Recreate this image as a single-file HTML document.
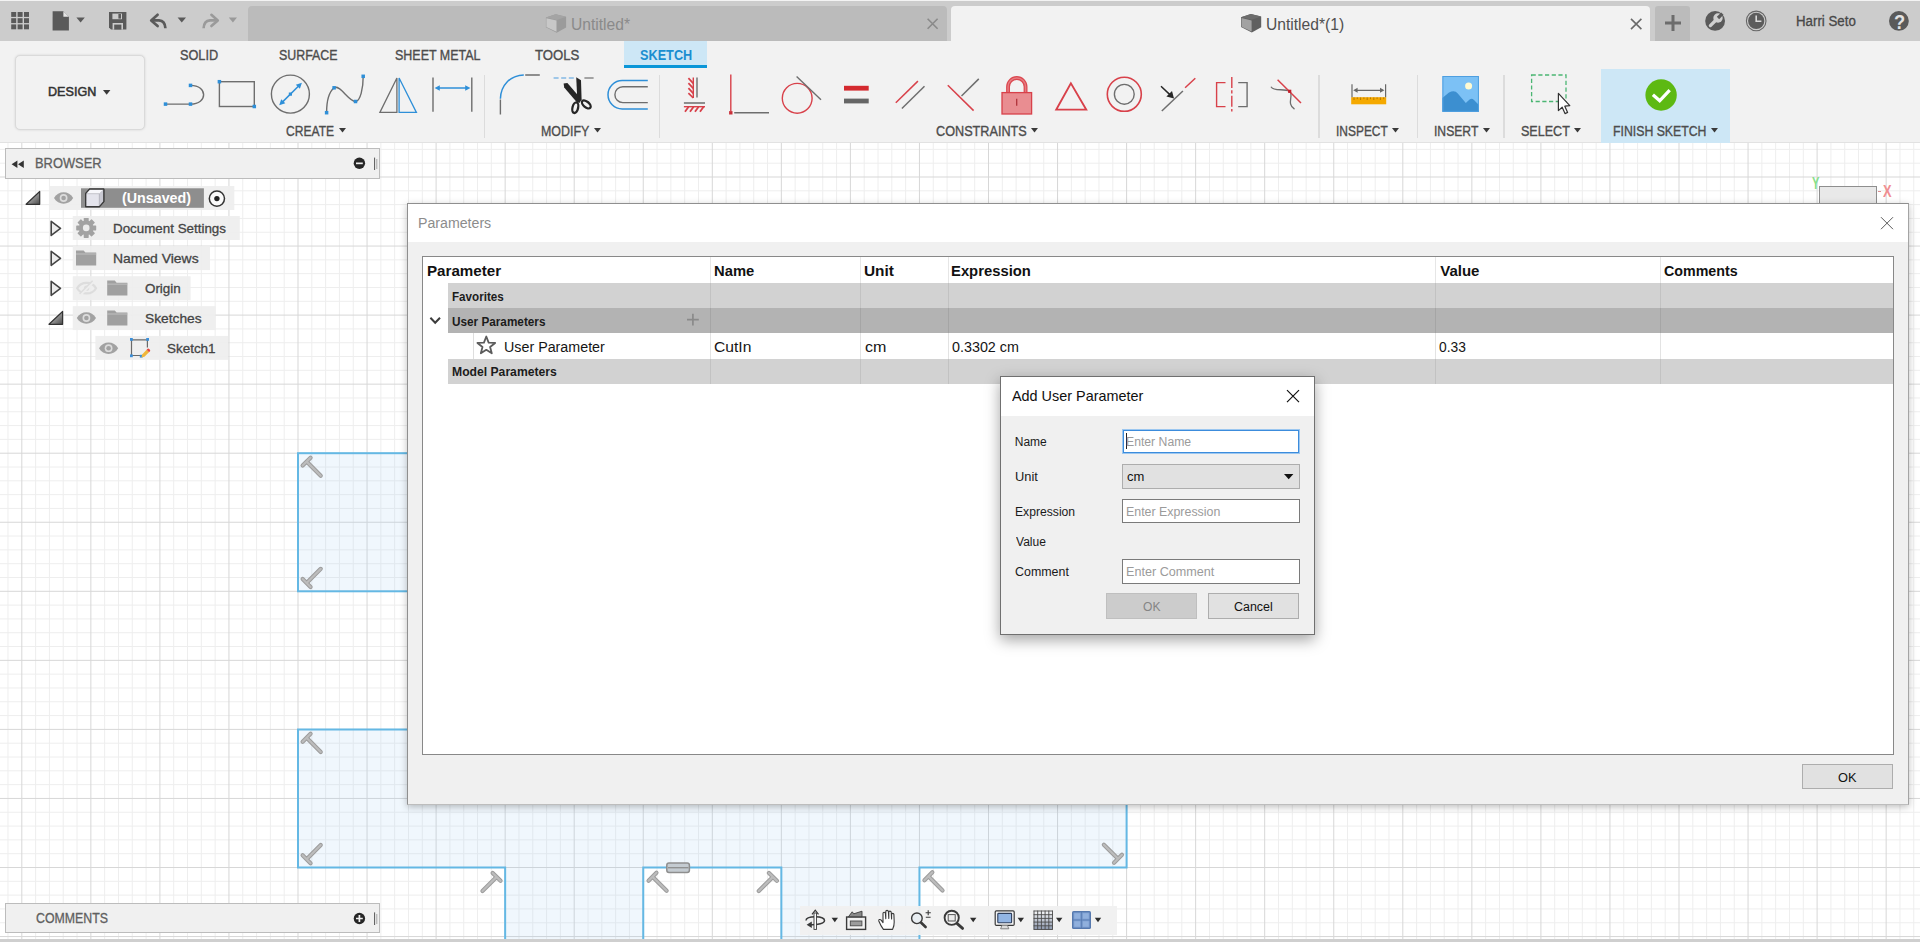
<!DOCTYPE html>
<html lang="en"><head><meta charset="utf-8"><title>Autodesk Fusion 360 - Parameters</title>
<style>
html,body{margin:0;padding:0;}
body{width:1920px;height:942px;overflow:hidden;background:#fff;position:relative;font-family:"Liberation Sans",Arial,sans-serif;}
.b{position:absolute;box-sizing:border-box;display:block;}
.t{position:absolute;white-space:nowrap;transform-origin:0 50%;display:block;}
svg{overflow:visible;}
</style></head><body>
<main id="canvas">
<svg class="b" style="left:0;top:0" width="1920" height="942" viewBox="0 0 1920 942"><path d="M7.99 142V942M35.61 142V942M49.42 142V942M63.23 142V942M77.04 142V942M104.66 142V942M118.47 142V942M132.28 142V942M146.09 142V942M173.71 142V942M187.52 142V942M201.33 142V942M215.14 142V942M242.76 142V942M256.57 142V942M270.38 142V942M284.19 142V942M311.81 142V942M325.62 142V942M339.43 142V942M353.24 142V942M380.86 142V942M394.67 142V942M408.48 142V942M422.29 142V942M449.91 142V942M463.72 142V942M477.53 142V942M491.34 142V942M518.96 142V942M532.77 142V942M546.58 142V942M560.39 142V942M588.01 142V942M601.82 142V942M615.63 142V942M629.44 142V942M657.06 142V942M670.87 142V942M684.68 142V942M698.49 142V942M726.11 142V942M739.92 142V942M753.73 142V942M767.54 142V942M795.16 142V942M808.97 142V942M822.78 142V942M836.59 142V942M864.21 142V942M878.02 142V942M891.83 142V942M905.64 142V942M933.26 142V942M947.07 142V942M960.88 142V942M974.69 142V942M1002.31 142V942M1016.12 142V942M1029.93 142V942M1043.74 142V942M1071.36 142V942M1085.17 142V942M1098.98 142V942M1112.79 142V942M1140.41 142V942M1154.22 142V942M1168.03 142V942M1181.84 142V942M1209.46 142V942M1223.27 142V942M1237.08 142V942M1250.89 142V942M1278.51 142V942M1292.32 142V942M1306.13 142V942M1319.94 142V942M1347.56 142V942M1361.37 142V942M1375.18 142V942M1388.99 142V942M1416.61 142V942M1430.42 142V942M1444.23 142V942M1458.04 142V942M1485.66 142V942M1499.47 142V942M1513.28 142V942M1527.09 142V942M1554.71 142V942M1568.52 142V942M1582.33 142V942M1596.14 142V942M1623.76 142V942M1637.57 142V942M1651.38 142V942M1665.19 142V942M1692.81 142V942M1706.62 142V942M1720.43 142V942M1734.24 142V942M1761.86 142V942M1775.67 142V942M1789.48 142V942M1803.29 142V942M1830.91 142V942M1844.72 142V942M1858.53 142V942M1872.34 142V942M1899.96 142V942M1913.77 142V942M0 149.38H1920M0 163.19H1920M0 190.81H1920M0 204.62H1920M0 218.43H1920M0 232.24H1920M0 259.86H1920M0 273.67H1920M0 287.48H1920M0 301.29H1920M0 328.91H1920M0 342.72H1920M0 356.53H1920M0 370.34H1920M0 397.96H1920M0 411.77H1920M0 425.58H1920M0 439.39H1920M0 467.01H1920M0 480.82H1920M0 494.63H1920M0 508.44H1920M0 536.06H1920M0 549.87H1920M0 563.68H1920M0 577.49H1920M0 605.11H1920M0 618.92H1920M0 632.73H1920M0 646.54H1920M0 674.16H1920M0 687.97H1920M0 701.78H1920M0 715.59H1920M0 743.21H1920M0 757.02H1920M0 770.83H1920M0 784.64H1920M0 812.26H1920M0 826.07H1920M0 839.88H1920M0 853.69H1920M0 881.31H1920M0 895.12H1920M0 908.93H1920M0 922.74H1920" stroke="#eeeeee" stroke-width="1" fill="none"/><path d="M21.80 142V942M90.85 142V942M159.90 142V942M228.95 142V942M298.00 142V942M367.05 142V942M436.10 142V942M505.15 142V942M574.20 142V942M643.25 142V942M712.30 142V942M781.35 142V942M850.40 142V942M919.45 142V942M988.50 142V942M1057.55 142V942M1126.60 142V942M1195.65 142V942M1264.70 142V942M1333.75 142V942M1402.80 142V942M1471.85 142V942M1540.90 142V942M1609.95 142V942M1679.00 142V942M1748.05 142V942M1817.10 142V942M1886.15 142V942M0 177.00H1920M0 246.05H1920M0 315.10H1920M0 384.15H1920M0 453.20H1920M0 522.25H1920M0 591.30H1920M0 660.35H1920M0 729.40H1920M0 798.45H1920M0 867.50H1920M0 936.55H1920" stroke="#d7d7d7" stroke-width="1" fill="none"/><rect x="298.00" y="453.20" width="207.15" height="138.10" fill="rgba(150,200,240,0.145)" stroke="#64b8e4" stroke-width="2"/><polygon points="298.00,729.40 1126.60,729.40 1126.60,867.50 919.45,867.50 919.45,960.00 781.35,960.00 781.35,867.50 643.25,867.50 643.25,960.00 505.15,960.00 505.15,867.50 298.00,867.50" fill="rgba(150,200,240,0.145)" stroke="#64b8e4" stroke-width="2"/><g transform="translate(306.6,461.6) rotate(45)" stroke-linecap="round" fill="none"><path d="M0 -5.6V5.6M0 0H20" stroke="#9c9c9c" stroke-width="4.2"/><path d="M0 -5.6V5.6M0 0H20" stroke="#bcbcbc" stroke-width="2.2"/></g><g transform="translate(306.6,583) rotate(-45)" stroke-linecap="round" fill="none"><path d="M0 -5.6V5.6M0 0H20" stroke="#9c9c9c" stroke-width="4.2"/><path d="M0 -5.6V5.6M0 0H20" stroke="#bcbcbc" stroke-width="2.2"/></g><g transform="translate(306.6,737.8) rotate(45)" stroke-linecap="round" fill="none"><path d="M0 -5.6V5.6M0 0H20" stroke="#9c9c9c" stroke-width="4.2"/><path d="M0 -5.6V5.6M0 0H20" stroke="#bcbcbc" stroke-width="2.2"/></g><g transform="translate(306.6,859.2) rotate(-45)" stroke-linecap="round" fill="none"><path d="M0 -5.6V5.6M0 0H20" stroke="#9c9c9c" stroke-width="4.2"/><path d="M0 -5.6V5.6M0 0H20" stroke="#bcbcbc" stroke-width="2.2"/></g><g transform="translate(496.6,876.9) rotate(135)" stroke-linecap="round" fill="none"><path d="M0 -5.6V5.6M0 0H20" stroke="#9c9c9c" stroke-width="4.2"/><path d="M0 -5.6V5.6M0 0H20" stroke="#bcbcbc" stroke-width="2.2"/></g><g transform="translate(652.5,876.7) rotate(45)" stroke-linecap="round" fill="none"><path d="M0 -5.6V5.6M0 0H20" stroke="#9c9c9c" stroke-width="4.2"/><path d="M0 -5.6V5.6M0 0H20" stroke="#bcbcbc" stroke-width="2.2"/></g><g transform="translate(772.9,876.9) rotate(135)" stroke-linecap="round" fill="none"><path d="M0 -5.6V5.6M0 0H20" stroke="#9c9c9c" stroke-width="4.2"/><path d="M0 -5.6V5.6M0 0H20" stroke="#bcbcbc" stroke-width="2.2"/></g><g transform="translate(928.4,876.3) rotate(45)" stroke-linecap="round" fill="none"><path d="M0 -5.6V5.6M0 0H20" stroke="#9c9c9c" stroke-width="4.2"/><path d="M0 -5.6V5.6M0 0H20" stroke="#bcbcbc" stroke-width="2.2"/></g><g transform="translate(1118,858.8) rotate(-135)" stroke-linecap="round" fill="none"><path d="M0 -5.6V5.6M0 0H20" stroke="#9c9c9c" stroke-width="4.2"/><path d="M0 -5.6V5.6M0 0H20" stroke="#bcbcbc" stroke-width="2.2"/></g><rect x="666.8" y="863" width="22.6" height="9.4" rx="2.2" fill="#c4cbd1" stroke="#8e8e8e" stroke-width="1.5"/><path d="M668 867.7H688.5" stroke="#8e8e8e" stroke-width="1.3"/></svg>
<div class="b" style="left:1818.6px;top:186px;width:58.9px;height:30px;background:#e9e9e9;border:1px solid #8e8e8e;"></div>
<span class="t" style="left:1811.68px;top:174.70px;font-size:16px;line-height:18px;color:#86e08a;font-weight:bold;transform:scaleX(0.6944);">Y</span>
<span class="t" style="left:1882.67px;top:182.80px;font-size:17px;line-height:18px;color:#f08e92;font-weight:bold;transform:scaleX(0.7570);">X</span>
<div class="b" style="left:1877.6px;top:190.8px;width:3px;height:1.2px;background:#dc8f92"></div>
<div class="b" style="left:0px;top:939.2px;width:1920px;height:3px;background:#cfcfcf;"></div>
</main>
<header id="appbar">
<div class="b" style="left:0px;top:0px;width:1920px;height:41px;background:#cccccc;border-top:1px solid #f3f3f3;"></div>
<div class="b" style="left:0px;top:41px;width:1920px;height:102px;background:#f2f2f2;border-bottom:1px solid #e2e2e2;"></div>
<div class="b" style="left:248px;top:6px;width:699px;height:35px;background:#bbbbbb;border-radius:4px 4px 0 0;"></div>
<div class="b" style="left:951px;top:6px;width:699px;height:36px;background:#f2f2f2;border-radius:4px 4px 0 0;"></div>
<div class="b" style="left:1655px;top:6px;width:35px;height:35px;background:#bbbbbb;border-radius:3px 3px 0 0;"></div>
<svg class="b" style="left:0px;top:0px;" width="40" height="41" viewBox="0 0 40 41"><rect x="11.2" y="12.0" width="5" height="4.9" fill="#5a5a5a"/><rect x="11.2" y="18.2" width="5" height="4.9" fill="#5a5a5a"/><rect x="11.2" y="24.4" width="5" height="4.9" fill="#5a5a5a"/><rect x="17.6" y="12.0" width="5" height="4.9" fill="#5a5a5a"/><rect x="17.6" y="18.2" width="5" height="4.9" fill="#5a5a5a"/><rect x="17.6" y="24.4" width="5" height="4.9" fill="#5a5a5a"/><rect x="24.0" y="12.0" width="5" height="4.9" fill="#5a5a5a"/><rect x="24.0" y="18.2" width="5" height="4.9" fill="#5a5a5a"/><rect x="24.0" y="24.4" width="5" height="4.9" fill="#5a5a5a"/></svg>
<svg class="b" style="left:0px;top:0px;" width="100" height="41" viewBox="0 0 100 41"><path d="M52.6 11.3H63.4L68.9 16.8V30.4H52.6Z" fill="#5a5a5a"/><path d="M63.4 11.3V16.8H68.9Z" fill="#e4e4e4"/><path d="M76.4 17.6H84.8L80.6 22.6Z" fill="#5a5a5a"/></svg>
<svg class="b" style="left:100px;top:0px;" width="40" height="41" viewBox="0 0 40 41"><path d="M9 12H26.4V29.6H11L9 27.6Z" fill="#5a5a5a"/><rect x="12.4" y="13.6" width="9.6" height="5.6" fill="#cccccc"/><rect x="18.4" y="14" width="2.6" height="4.6" fill="#5a5a5a"/><rect x="12.6" y="23" width="10.4" height="6.6" fill="#cccccc"/><rect x="14.2" y="24.6" width="7.2" height="5" fill="#5a5a5a"/></svg>
<svg class="b" style="left:140px;top:0px;" width="60" height="41" viewBox="0 0 60 41"><path d="M17.6 14.8L11.2 20.4L17.6 26" fill="none" stroke="#5a5a5a" stroke-width="2.7" stroke-linejoin="round" stroke-linecap="round"/><path d="M11.6 20.4H19Q25 20.8 25.4 28.2" fill="none" stroke="#5a5a5a" stroke-width="2.7"/><path d="M37.6 17.6H46L41.8 22.6Z" fill="#5a5a5a"/></svg>
<svg class="b" style="left:195px;top:0px;" width="60" height="41" viewBox="0 0 60 41"><path d="M16.4 14.8L22.8 20.4L16.4 26" fill="none" stroke="#9a9a9a" stroke-width="2.6" stroke-linejoin="round" stroke-linecap="round"/><path d="M22.4 20.4H15Q9 20.8 8.6 28.2" fill="none" stroke="#9a9a9a" stroke-width="2.6"/><path d="M33.8 17.6H42L37.9 22.4Z" fill="#9a9a9a"/></svg>
<svg class="b" style="left:0px;top:0px;" width="1920" height="41" viewBox="0 0 1920 41"><g transform="translate(545.9,14.1)"><path d="M0 3.3L9.8 0.2L20.2 2.7V13.4L10.8 18.6L0 13.2Z" fill="#9b9b9b"/><path d="M0 3.3L9.8 0.2L20.2 2.7L10.8 5.9Z" fill="#a4a4a4"/><path d="M0.5 4.2L10.6 6.5V17.6L0.5 12.8Z" fill="#c8c8c8"/></g><g transform="translate(1241,13.9)"><path d="M0 3.3L9.8 0.2L20.2 2.7V13.4L10.8 18.6L0 13.2Z" fill="#606060"/><path d="M0 3.3L9.8 0.2L20.2 2.7L10.8 5.9Z" fill="#6c6c6c"/><path d="M0.5 4.2L10.6 6.5V17.6L0.5 12.8Z" fill="#a2a2a2"/></g><path d="M927.6 18.8L937.6 28.8M937.6 18.8L927.6 28.8" stroke="#8a8a8a" stroke-width="1.6"/><path d="M1631 18.9L1641.4 29.1M1641.4 18.9L1631 29.1" stroke="#6a6a6a" stroke-width="1.6"/><path d="M1665 23H1681M1673 15V31" stroke="#6c6c6c" stroke-width="3"/><circle cx="1715.1" cy="20.9" r="9.9" fill="#5a5a5a"/><path d="M1710.4 25.6L1716 20" stroke="#cfcfcf" stroke-width="3.3" stroke-linecap="round"/><circle cx="1718" cy="18" r="4.7" fill="#cfcfcf"/><path d="M1718 18L1722.4 13.6" stroke="#5a5a5a" stroke-width="3.2"/><circle cx="1756.2" cy="20.9" r="9.8" fill="none" stroke="#666" stroke-width="1.1"/><circle cx="1756.2" cy="20.9" r="8.1" fill="#5c5c5c"/><path d="M1756.2 15.4V21.2H1761.4" fill="none" stroke="#dadada" stroke-width="1.6"/><circle cx="1898.9" cy="20.9" r="9.9" fill="#5a5a5a"/></svg>
<span class="t" style="left:570.83px;top:15.30px;font-size:16px;line-height:20px;color:#8a8a8a;transform:scaleX(0.9756);">Untitled*</span>
<span class="t" style="left:1266.03px;top:15.30px;font-size:16px;line-height:20px;color:#505050;transform:scaleX(0.9764);">Untitled*(1)</span>
<span class="t" style="left:1795.54px;top:11.00px;font-size:14px;line-height:20px;color:#484848;transform:scaleX(0.9491);-webkit-text-stroke:0.3px #484848;">Harri Seto</span>
<span class="t" style="left:1893.58px;top:9.60px;font-size:20px;line-height:24px;color:#e2e2e2;font-weight:bold;transform:scaleX(0.9118);">?</span>
<div class="b" style="left:624px;top:41px;width:83px;height:27px;background:#cde7f6;border-bottom:3px solid #0a96d8;"></div>
<span class="t" style="left:179.93px;top:45.00px;font-size:14px;line-height:20px;color:#4d4d4d;transform:scaleX(0.9082);-webkit-text-stroke:0.35px #4d4d4d;">SOLID</span>
<span class="t" style="left:278.94px;top:45.00px;font-size:14px;line-height:20px;color:#4d4d4d;transform:scaleX(0.8861);-webkit-text-stroke:0.35px #4d4d4d;">SURFACE</span>
<span class="t" style="left:394.94px;top:45.00px;font-size:14px;line-height:20px;color:#4d4d4d;transform:scaleX(0.8902);-webkit-text-stroke:0.35px #4d4d4d;">SHEET METAL</span>
<span class="t" style="left:535.24px;top:45.00px;font-size:14px;line-height:20px;color:#4d4d4d;transform:scaleX(0.9401);-webkit-text-stroke:0.35px #4d4d4d;">TOOLS</span>
<span class="t" style="left:639.62px;top:45.00px;font-size:14px;line-height:20px;color:#1a8ed0;font-weight:bold;transform:scaleX(0.9073);">SKETCH</span>
<div class="b" style="left:15px;top:54.5px;width:130px;height:75px;background:#f2f2f2;border:1px solid #dadada;border-radius:5px;box-shadow:0 0 2.5px rgba(0,0,0,0.13);"></div>
<span class="t" style="left:48.39px;top:82.10px;font-size:13.5px;line-height:20px;color:#333333;transform:scaleX(0.9325);-webkit-text-stroke:0.55px #333333;">DESIGN</span>
<svg class="b" style="left:103px;top:90.2px;" width="7.4" height="4.8" viewBox="0 0 7.4 4.8"><path d="M0 0H7.4L3.7 4.8Z" fill="#3a3a3a"/></svg>
<span class="t" style="left:286.40px;top:121.00px;font-size:14px;line-height:20px;color:#4d4d4d;transform:scaleX(0.8630);-webkit-text-stroke:0.35px #4d4d4d;">CREATE</span>
<svg class="b" style="left:339.2px;top:128px;" width="7" height="4.6" viewBox="0 0 7 4.6"><path d="M0 0H7L3.5 4.6Z" fill="#3a3a3a"/></svg>
<span class="t" style="left:541.01px;top:121.00px;font-size:14px;line-height:20px;color:#4d4d4d;transform:scaleX(0.8870);-webkit-text-stroke:0.35px #4d4d4d;">MODIFY</span>
<svg class="b" style="left:594px;top:128px;" width="7" height="4.6" viewBox="0 0 7 4.6"><path d="M0 0H7L3.5 4.6Z" fill="#3a3a3a"/></svg>
<span class="t" style="left:936.07px;top:121.00px;font-size:14px;line-height:20px;color:#4d4d4d;transform:scaleX(0.9042);-webkit-text-stroke:0.35px #4d4d4d;">CONSTRAINTS</span>
<svg class="b" style="left:1030.6px;top:128px;" width="7" height="4.6" viewBox="0 0 7 4.6"><path d="M0 0H7L3.5 4.6Z" fill="#3a3a3a"/></svg>
<span class="t" style="left:1335.92px;top:121.00px;font-size:14px;line-height:20px;color:#4d4d4d;transform:scaleX(0.8538);-webkit-text-stroke:0.35px #4d4d4d;">INSPECT</span>
<svg class="b" style="left:1391.6px;top:128px;" width="7" height="4.6" viewBox="0 0 7 4.6"><path d="M0 0H7L3.5 4.6Z" fill="#3a3a3a"/></svg>
<span class="t" style="left:1434.11px;top:121.00px;font-size:14px;line-height:20px;color:#4d4d4d;transform:scaleX(0.8676);-webkit-text-stroke:0.35px #4d4d4d;">INSERT</span>
<svg class="b" style="left:1483px;top:128px;" width="7" height="4.6" viewBox="0 0 7 4.6"><path d="M0 0H7L3.5 4.6Z" fill="#3a3a3a"/></svg>
<div class="b" style="left:1601px;top:69px;width:129px;height:74px;background:#cde7f6;"></div>
<span class="t" style="left:1521.44px;top:121.00px;font-size:14px;line-height:20px;color:#4d4d4d;transform:scaleX(0.8964);-webkit-text-stroke:0.35px #4d4d4d;">SELECT</span>
<svg class="b" style="left:1574px;top:128px;" width="7" height="4.6" viewBox="0 0 7 4.6"><path d="M0 0H7L3.5 4.6Z" fill="#3a3a3a"/></svg>
<span class="t" style="left:1613.02px;top:121.00px;font-size:14px;line-height:20px;color:#4d4d4d;transform:scaleX(0.8773);-webkit-text-stroke:0.35px #4d4d4d;">FINISH SKETCH</span>
<svg class="b" style="left:1710.6px;top:128px;" width="7" height="4.6" viewBox="0 0 7 4.6"><path d="M0 0H7L3.5 4.6Z" fill="#3a3a3a"/></svg>
<div class="b" style="left:483.75px;top:75px;width:1.5px;height:63px;background:#dcdcdc;"></div>
<div class="b" style="left:658.75px;top:75px;width:1.5px;height:63px;background:#dcdcdc;"></div>
<div class="b" style="left:1318.25px;top:75px;width:1.5px;height:63px;background:#dcdcdc;"></div>
<div class="b" style="left:1416.75px;top:75px;width:1.5px;height:63px;background:#dcdcdc;"></div>
<div class="b" style="left:1503.25px;top:75px;width:1.5px;height:63px;background:#dcdcdc;"></div>
<svg class="b" style="left:0px;top:0px;" width="1920" height="143" viewBox="0 0 1920 143"><path d="M165.5 104.1H190.5M190.5 85.4C208 85.4 208 104.1 190.5 104.1" fill="none" stroke="#6e6e6e" stroke-width="1.4"/><rect x="163.75" y="102.35" width="3.5" height="3.5" fill="#2e8fd8"/><rect x="188.75" y="102.35" width="3.5" height="3.5" fill="#2e8fd8"/><rect x="188.75" y="83.65" width="3.5" height="3.5" fill="#2e8fd8"/><rect x="219.4" y="81.7" width="34.9" height="24.8" fill="none" stroke="#6e6e6e" stroke-width="1.4"/><rect x="217.65" y="79.95" width="3.5" height="3.5" fill="#2e8fd8"/><rect x="252.55" y="104.75" width="3.5" height="3.5" fill="#2e8fd8"/><circle cx="290.4" cy="94.1" r="19" fill="none" stroke="#6e6e6e" stroke-width="1.4"/><path d="M282.6 101.9L298.6 86" stroke="#2e8fd8" stroke-width="1.5"/><path d="M279.2 105.3L281.2 99.2L285.3 103.3ZM301.9 82.7L295.8 84.7L299.9 88.8Z" fill="#2e8fd8"/><rect x="288.80" y="92.50" width="3.2" height="3.2" fill="#2e8fd8"/><path d="M326.6 112.7C326.6 102 329 92 334.1 87.8C340 84 348 101 355.5 101.5C360.5 101 363.2 88 363.2 76.3" fill="none" stroke="#6e6e6e" stroke-width="1.4"/><rect x="324.85" y="110.95" width="3.5" height="3.5" fill="#2e8fd8"/><rect x="332.35" y="86.05" width="3.5" height="3.5" fill="#2e8fd8"/><rect x="353.75" y="99.75" width="3.5" height="3.5" fill="#2e8fd8"/><rect x="361.45" y="74.55" width="3.5" height="3.5" fill="#2e8fd8"/><path d="M396.9 78L379.9 112.4H396.9Z" fill="none" stroke="#6e6e6e" stroke-width="1.3"/><path d="M399.1 78V112.4H416.4Z" fill="none" stroke="#2e8fd8" stroke-width="1.3"/><path d="M433 77.5V111.8M471.8 77.5V111.8" stroke="#6e6e6e" stroke-width="1.4"/><path d="M437 88H468" stroke="#2e8fd8" stroke-width="1.5"/><path d="M434.6 88L439.8 85.2V90.8ZM470.4 88L465.2 85.2V90.8Z" fill="#2e8fd8"/><path d="M500.4 99.6V114.6M525.2 75H539.8" stroke="#6e6e6e" stroke-width="1.4"/><path d="M500.4 98.8C500.8 85 510 75.6 523.8 75" fill="none" stroke="#2e8fd8" stroke-width="1.5"/><path d="M553.6 78H576" stroke="#4d9bdd" stroke-width="1.2" stroke-dasharray="5 2.6"/><path d="M584.4 78H593.6" stroke="#6e6e6e" stroke-width="1.2"/><path d="M576.2 77.2L581 80.2L581.6 99.6L578.6 101.8L577.2 97.4Z" fill="#262626"/><path d="M563.6 83.4L567.4 83L581.6 99.6L579.4 103L576.2 101.4L564.2 87.4Z" fill="#262626"/><ellipse cx="575.3" cy="107.7" rx="2.8" ry="5.4" transform="rotate(14 575.3 107.7)" fill="none" stroke="#262626" stroke-width="2.3"/><ellipse cx="586.3" cy="104.4" rx="2.8" ry="5.2" transform="rotate(-50 586.3 104.4)" fill="none" stroke="#262626" stroke-width="2.3"/><path d="M647.8 80.5H622.2A14.2 14.2 0 0 0 622.2 108.9H647.8" fill="none" stroke="#2e8fd8" stroke-width="1.5"/><path d="M647.8 86.8H622.8A7.9 7.9 0 0 0 622.8 102.6H647.8" fill="none" stroke="#6e6e6e" stroke-width="1.4"/><path d="M693.3 77.5V98" stroke="#d8414a" stroke-width="1.4"/><path d="M697 77.5V97.4M683.9 103H705" stroke="#6e6e6e" stroke-width="1.4"/><path d="M683.9 106.7H705" stroke="#d8414a" stroke-width="1.4"/><path d="M688.4 78.2L693.3 83.4M688.4 83.2L693.3 88.4M688.4 88.2L693.3 93.4M688.4 93.2L693.3 98" stroke="#d8414a" stroke-width="1.7"/><path d="M685 111.8L688.6 106.7M690 111.8L693.6 106.7M695 111.8L698.6 106.7M700 111.8L703.6 106.7" stroke="#d8414a" stroke-width="1.8"/><path d="M730.8 74.6V111" stroke="#d8414a" stroke-width="1.4"/><path d="M734.2 112.8H769" stroke="#6e6e6e" stroke-width="1.4"/><rect x="729.10" y="111.10" width="3.4" height="3.4" fill="#c9303a"/><circle cx="797.2" cy="98.3" r="14.9" fill="none" stroke="#d8414a" stroke-width="1.4"/><path d="M796.6 76.5L821 99.8" stroke="#6e6e6e" stroke-width="1.4"/><rect x="844" y="85.8" width="24.7" height="4.8" fill="#d42a2f"/><rect x="844" y="98.6" width="24.7" height="4.8" fill="#666"/><path d="M895.8 102.7L917.9 81.1" stroke="#d8414a" stroke-width="1.5"/><path d="M901.9 108.5L924.5 86.2" stroke="#6e6e6e" stroke-width="1.5"/><path d="M947.8 85.2L973.6 110.6" stroke="#d8414a" stroke-width="1.5"/><path d="M978.8 78.9L961.5 96" stroke="#6e6e6e" stroke-width="1.5"/><path d="M1008.05 92.4V86.7A8.75 8.75 0 0 1 1025.55 86.7V92.4" fill="none" stroke="#db4850" stroke-width="3.9"/><path d="M1008.05 92.4V86.7A8.75 8.75 0 0 1 1025.55 86.7V92.4" fill="none" stroke="#e77b80" stroke-width="1.5"/><rect x="1002" y="92.6" width="29.6" height="21.4" fill="#e98d91" stroke="#d8414a" stroke-width="1.3"/><path d="M1016.7 98.8V105.8" stroke="#b0333a" stroke-width="1.3"/><path d="M1070.9 83.3L1056.2 109.7H1086.3Z" fill="none" stroke="#d8414a" stroke-width="1.8" stroke-linejoin="miter"/><circle cx="1124.3" cy="94.3" r="17" fill="none" stroke="#d8414a" stroke-width="1.6"/><circle cx="1124.3" cy="94.3" r="9.9" fill="none" stroke="#6e6e6e" stroke-width="1.4"/><path d="M1161.8 111L1182.9 91" stroke="#6e6e6e" stroke-width="1.5"/><path d="M1185.1 87.7L1195.3 78.2" stroke="#d8414a" stroke-width="1.5"/><path d="M1161 86.2L1169.6 94.4" stroke="#262626" stroke-width="1.5"/><path d="M1174 98.4L1166.4 96.6L1172 91Z" fill="#262626"/><path d="M1225.5 82.6H1216.6V106.6H1225.5" fill="none" stroke="#d8414a" stroke-width="1.4"/><path d="M1238.2 82.6H1247.1V106.6H1238.2" fill="none" stroke="#6e6e6e" stroke-width="1.4"/><path d="M1231.8 77V111.6" stroke="#d8414a" stroke-width="1.4" stroke-dasharray="11 2.2 3.4 2.2"/><path d="M1271 86.7C1274 92 1284 88 1289.7 91.3C1294 95 1286 104 1294.5 109.1" fill="none" stroke="#6e6e6e" stroke-width="1.3"/><path d="M1277.6 79.7L1301 103" stroke="#d8414a" stroke-width="1.5"/><rect x="1288.10" y="89.70" width="3.2" height="3.2" fill="#c4202c"/><rect x="1351.2" y="97.2" width="35" height="7.1" fill="#f5a900"/><path d="M1354.0 97.4v2.6" stroke="#a86f00" stroke-width="0.8"/><path d="M1357.3 97.4v1.7" stroke="#a86f00" stroke-width="0.8"/><path d="M1360.6 97.4v2.6" stroke="#a86f00" stroke-width="0.8"/><path d="M1363.9 97.4v1.7" stroke="#a86f00" stroke-width="0.8"/><path d="M1367.2 97.4v2.6" stroke="#a86f00" stroke-width="0.8"/><path d="M1370.5 97.4v1.7" stroke="#a86f00" stroke-width="0.8"/><path d="M1373.8 97.4v2.6" stroke="#a86f00" stroke-width="0.8"/><path d="M1377.1 97.4v1.7" stroke="#a86f00" stroke-width="0.8"/><path d="M1380.4 97.4v2.6" stroke="#a86f00" stroke-width="0.8"/><path d="M1383.7 97.4v1.7" stroke="#a86f00" stroke-width="0.8"/><path d="M1352 84.3V97.2M1385.6 84.3V97.2M1355 90.3H1382.6" stroke="#686868" stroke-width="1.2"/><path d="M1353.2 90.3L1357.6 87.8V92.8ZM1384.4 90.3L1380 87.8V92.8Z" fill="#686868"/><rect x="1442.4" y="76" width="36.5" height="35.8" fill="#7cc1f5"/><path d="M1442.4 111.8V98L1449 92.6Q1454.6 89.4 1457.8 93.6L1465.8 103L1469.6 99.4Q1471.8 97.6 1474 100L1478.9 105V111.8Z" fill="#3c8fd0"/><circle cx="1468.6" cy="86" r="3.5" fill="#fffbd2"/><rect x="1442.9" y="76.5" width="35.5" height="34.8" fill="none" stroke="#4e9fe0" stroke-width="1"/><rect x="1531.6" y="75" width="34.4" height="26.5" fill="none" stroke="#4bb673" stroke-width="1.3" stroke-dasharray="4.2 2.5"/><path d="M1558.4 93.4V110.6L1562.2 107.2L1565 113.6L1567.6 112.4L1564.8 106.2L1569.8 105.6Z" fill="#fff" stroke="#333" stroke-width="1.2" stroke-linejoin="round"/><circle cx="1661.1" cy="95" r="15.7" fill="#5db912"/><path d="M1652.9 94.8L1659.7 100.8L1669.7 90.2" fill="none" stroke="#fff" stroke-width="3.3"/></svg>
</header>
<aside id="panels">
<div class="b" style="left:5px;top:148.3px;width:374.6px;height:30.3px;background:#f0f0f0;border:1px solid #bcbcbc;"></div>
<svg class="b" style="left:0px;top:140px;" width="400" height="50" viewBox="0 0 400 50"><path d="M11.6 24.3L17.4 20.5V28.1ZM18 24.3L23.8 20.5V28.1Z" fill="#333"/><circle cx="359.4" cy="23.3" r="5.7" fill="#262626"/><rect x="356" y="22.5" width="6.8" height="1.7" fill="#f0f0f0"/><path d="M374.6 17.6V30" stroke="#555" stroke-width="1"/><path d="M376.8 19V29" stroke="#a5a5a5" stroke-width="1"/></svg>
<span class="t" style="left:35.47px;top:152.60px;font-size:14px;line-height:20px;color:#606060;transform:scaleX(0.9212);-webkit-text-stroke:0.3px #606060;">BROWSER</span>
<svg class="b" style="left:0px;top:0px;" width="400" height="400" viewBox="0 0 400 400"><defs><linearGradient id="tg" x1="0" y1="0" x2="1" y2="1"><stop offset="0.3" stop-color="#b5b5b5"/><stop offset="1" stop-color="#4a4a4a"/></linearGradient></defs><rect x="49.3" y="186" width="185.0" height="24" fill="rgba(238,238,238,0.93)"/><rect x="72.8" y="216" width="167.0" height="24" fill="rgba(238,238,238,0.93)"/><rect x="72.8" y="246.10000000000002" width="137.2" height="24" fill="rgba(238,238,238,0.93)"/><rect x="72.8" y="276.2" width="117.8" height="24" fill="rgba(238,238,238,0.93)"/><rect x="72.8" y="306.1" width="142.8" height="24" fill="rgba(238,238,238,0.93)"/><rect x="95.4" y="335.9" width="132.6" height="24" fill="rgba(238,238,238,0.93)"/><path d="M39.7 191.5V204.29999999999998H26.1Z" fill="url(#tg)" stroke="#333" stroke-width="1.2" stroke-linejoin="round"/><g transform="translate(63.6,198)"><path d="M-9.6 0C-5.5 -7.6 5.5 -7.6 9.6 0C5.5 7.6 -5.5 7.6 -9.6 0Z" fill="#a2a2a2"/><circle r="3.9" fill="#dcdcdc"/><circle r="2.3" fill="#a2a2a2"/></g><rect x="81" y="188.3" width="122.9" height="19.5" fill="#8e8e8e"/><path d="M85.6 193.6L89.6 189.2H103.8V201.6L99.4 206.6H85.6Z" fill="#e4e4ec" stroke="#3a3a3a" stroke-width="1.2" stroke-linejoin="round"/><path d="M85.6 193.6H99.4V206.6M99.4 193.6L103.8 189.2" fill="none" stroke="#8a8a92" stroke-width="0.8"/><path d="M99.4 193.6L103.8 189.2V201.6L99.4 206.6Z" fill="#c9c9d2"/><path d="M85.6 193.6L89.6 189.2H103.8L99.4 193.6Z" fill="#f7f7fb"/><path d="M85.6 193.6L89.6 189.2H103.8V201.6L99.4 206.6H85.6Z" fill="none" stroke="#3a3a3a" stroke-width="1.2" stroke-linejoin="round"/><circle cx="216.9" cy="198.6" r="7.6" fill="#fafafa" stroke="#333" stroke-width="1.5"/><circle cx="216.9" cy="198.6" r="2.7" fill="#222"/><path d="M51.199999999999996 221.4L60.5 228.4L51.199999999999996 235.4Z" fill="#ececec" stroke="#444" stroke-width="1.6" stroke-linejoin="round"/><g transform="translate(86.2,227.9)"><rect x="-2.5" y="-10" width="5" height="20" rx="0.6" fill="#a2a2a2" transform="rotate(0)"/><rect x="-2.5" y="-10" width="5" height="20" rx="0.6" fill="#a2a2a2" transform="rotate(45)"/><rect x="-2.5" y="-10" width="5" height="20" rx="0.6" fill="#a2a2a2" transform="rotate(90)"/><rect x="-2.5" y="-10" width="5" height="20" rx="0.6" fill="#a2a2a2" transform="rotate(135)"/><circle r="7.3" fill="#a2a2a2"/><circle r="3.3" fill="#ececec"/></g><path d="M51.199999999999996 251.3L60.5 258.3L51.199999999999996 265.3Z" fill="#ececec" stroke="#444" stroke-width="1.6" stroke-linejoin="round"/><path d="M76 250.4H83.6L85.4 252.6H96.2V265.4H76Z" fill="#a0a0a0"/><path d="M76 254.0H96.2" stroke="#c4c4c4" stroke-width="0.9"/><path d="M51.199999999999996 281.3L60.5 288.3L51.199999999999996 295.3Z" fill="#ececec" stroke="#444" stroke-width="1.6" stroke-linejoin="round"/><g transform="translate(86.6,288.2)" opacity="0.55"><path d="M-9.4 0C-5.5 -7 5.5 -7 9.4 0C5.5 7 -5.5 7 -9.4 0Z" fill="none" stroke="#cfcfcf" stroke-width="2.2"/><circle r="2.6" fill="#cfcfcf"/><path d="M-6.5 6.5L6.5 -6.5" stroke="#eee" stroke-width="3"/><path d="M-7 5.5L6 -7.5" stroke="#cfcfcf" stroke-width="1.4"/></g><path d="M107.2 280.5H114.8L116.60000000000001 282.7H127.4V295.5H107.2Z" fill="#a0a0a0"/><path d="M107.2 284.1H127.4" stroke="#c4c4c4" stroke-width="0.9"/><path d="M62.6 311.5V324.3H49Z" fill="url(#tg)" stroke="#333" stroke-width="1.2" stroke-linejoin="round"/><g transform="translate(86.4,318)"><path d="M-9.6 0C-5.5 -7.6 5.5 -7.6 9.6 0C5.5 7.6 -5.5 7.6 -9.6 0Z" fill="#a2a2a2"/><circle r="3.9" fill="#dcdcdc"/><circle r="2.3" fill="#a2a2a2"/></g><path d="M107.2 310.4H114.8L116.60000000000001 312.59999999999997H127.4V325.4H107.2Z" fill="#a0a0a0"/><path d="M107.2 314.0H127.4" stroke="#c4c4c4" stroke-width="0.9"/><g transform="translate(108.6,348.2)"><path d="M-9.6 0C-5.5 -7.6 5.5 -7.6 9.6 0C5.5 7.6 -5.5 7.6 -9.6 0Z" fill="#a2a2a2"/><circle r="3.9" fill="#dcdcdc"/><circle r="2.3" fill="#a2a2a2"/></g><path d="M131.5 340V355.6M131.5 339.8H147.4M147.4 339.8V347.4M131.5 355.5H140" fill="none" stroke="#6a6a6a" stroke-width="1.2"/><rect x="130.0" y="338.0" width="2.8" height="2.8" fill="#3b8fd9"/><rect x="146.2" y="338.0" width="2.8" height="2.8" fill="#3b8fd9"/><rect x="130.0" y="354.40000000000003" width="2.8" height="2.8" fill="#3b8fd9"/><rect x="139.79999999999998" y="354.8" width="2.8" height="2.8" fill="#3b8fd9"/><path d="M141.4 357.4L142.2 354.4L146.6 349.8L149 352.2L144.4 356.8Z" fill="#f0b63a"/><path d="M146.6 349.8L147.6 348.8Q148.4 348.2 149.2 349L149.9 349.7Q150.6 350.5 150 351.2L149 352.2Z" fill="#e8473f"/></svg>
<span class="t" style="left:122.39px;top:188.10px;font-size:14px;line-height:20px;color:#ffffff;font-weight:bold;transform:scaleX(1.0198);">(Unsaved)</span>
<span class="t" style="left:113.13px;top:218.70px;font-size:13.3px;line-height:20px;color:#444444;transform:scaleX(1.0058);-webkit-text-stroke:0.3px #444444;">Document Settings</span>
<span class="t" style="left:113.09px;top:249.00px;font-size:13.3px;line-height:20px;color:#444444;transform:scaleX(1.0465);-webkit-text-stroke:0.3px #444444;">Named Views</span>
<span class="t" style="left:144.80px;top:279.00px;font-size:13.3px;line-height:20px;color:#444444;transform:scaleX(1.0064);-webkit-text-stroke:0.3px #444444;">Origin</span>
<span class="t" style="left:144.78px;top:308.90px;font-size:13.3px;line-height:20px;color:#444444;transform:scaleX(1.0360);-webkit-text-stroke:0.3px #444444;">Sketches</span>
<span class="t" style="left:167.10px;top:339.00px;font-size:13.3px;line-height:20px;color:#444444;transform:scaleX(1.0103);-webkit-text-stroke:0.3px #444444;">Sketch1</span>
<div class="b" style="left:5px;top:903.3px;width:374.6px;height:30.2px;background:#f0f0f0;border:1px solid #bcbcbc;"></div>
<span class="t" style="left:35.88px;top:908.10px;font-size:14px;line-height:20px;color:#606060;transform:scaleX(0.8818);-webkit-text-stroke:0.3px #606060;">COMMENTS</span>
<svg class="b" style="left:340px;top:900px;" width="50" height="40" viewBox="0 0 50 40"><circle cx="19.4" cy="18.5" r="5.7" fill="#262626"/><path d="M16 18.5H22.8M19.4 15.1V21.9" stroke="#f0f0f0" stroke-width="1.7"/><path d="M34.6 12.4V25" stroke="#555" stroke-width="1"/><path d="M36.8 14V24" stroke="#a5a5a5" stroke-width="1"/></svg>
<div class="b" style="left:799.7px;top:905.6px;width:317px;height:29.2px;background:rgba(240,240,240,0.94);"></div>
<svg class="b" style="left:0px;top:0px;" width="1920" height="942" viewBox="0 0 1920 942"><defs><linearGradient id="gg" x1="0" y1="0" x2="0" y2="1"><stop offset="0" stop-color="#fafafa"/><stop offset="1" stop-color="#8b97ad"/></linearGradient></defs><path d="M806 920.6C806 917.8 811 916.7 815.5 916.7C821 916.7 824.5 918.4 824.5 920.5C824.5 923.4 818 925 810.8 924.8" fill="none" stroke="#3a3a3a" stroke-width="1.5"/><path d="M806.6 924.8L811.8 921.4V928Z" fill="#3a3a3a"/><rect x="814" y="913" width="2.5" height="16.4" fill="#fff" stroke="#3a3a3a" stroke-width="0.9"/><path d="M812 914.4L815.25 910.2L818.5 914.4" fill="none" stroke="#3a3a3a" stroke-width="1.2"/><path d="M831.6 917.8H838.0L834.8000000000001 922.1999999999999Z" fill="#2e2e2e"/><rect x="846.6" y="917" width="19" height="12.4" fill="#f2f2f2" stroke="#3a3a3a" stroke-width="1.4"/><rect x="850.3" y="921" width="11.6" height="4.8" fill="#9c9c9c" stroke="#4a4a4a" stroke-width="0.9"/><path d="M848.4 916.8L852.2 911.8L853.8 913.8L862 911.2V916.8Z" fill="#8a8a8a" stroke="#3a3a3a" stroke-width="0.9" stroke-linejoin="round"/><path d="M883.4 929.4C881 926 879.6 923 878.8 921C878.4 919.6 880 918.8 881.2 920.2L883 922.6V913.4C883 911.8 885.2 911.8 885.4 913.4L885.8 918.6V911.6C885.8 910 888.2 910 888.4 911.6L888.8 918.4V912.2C888.8 910.8 891 910.8 891.2 912.2L891.6 919V914.4C891.6 913 893.8 913 893.9 914.4L894.2 922C894.4 925 893.6 927 892.6 929.4Z" fill="#fff" stroke="#3a3a3a" stroke-width="1.1" stroke-linejoin="round"/><circle cx="916.9" cy="918.3" r="5.3" fill="#e9eef2" stroke="#3a3a3a" stroke-width="1.4"/><path d="M921.2 922.8L925.6 927" stroke="#3a3a3a" stroke-width="2.6" stroke-linecap="round"/><path d="M925.6 912.7H930.8M928.2 910.2V915.2M925.8 917.3H930.6" stroke="#3a3a3a" stroke-width="1.1"/><circle cx="951.7" cy="917.8" r="7.1" fill="#f4f4f4" stroke="#3a3a3a" stroke-width="1.9"/><rect x="948.2" y="914.6" width="7" height="6.4" fill="#ececec" stroke="#555" stroke-width="1"/><path d="M957.2 923.6L962.6 928.4" stroke="#3a3a3a" stroke-width="2.8" stroke-linecap="round"/><path d="M970 917.8H976.4L973.2 922.1999999999999Z" fill="#2e2e2e"/><rect x="995.2" y="910.8" width="19" height="14.6" rx="1.2" fill="#f4f4f4" stroke="#3a3a3a" stroke-width="1.2"/><rect x="997.8" y="913.4" width="13.8" height="9.4" rx="0.8" fill="#92b5e4" stroke="#2e3f5e" stroke-width="1.1"/><path d="M1002 925.4L1000.6 928.8H1008.8L1007.4 925.4" fill="#ddd" stroke="#777" stroke-width="0.9"/><path d="M1017.6 917.8H1024.0L1020.8000000000001 922.1999999999999Z" fill="#2e2e2e"/><rect x="1033.6" y="910.6" width="19.2" height="18.8" fill="url(#gg)"/><path d="M1034.0 910.6V929.4M1033.6 911.0H1052.8" stroke="#4a4a4a" stroke-width="0.9"/><path d="M1037.7 910.6V929.4M1033.6 914.7H1052.8" stroke="#4a4a4a" stroke-width="0.9"/><path d="M1041.4 910.6V929.4M1033.6 918.4H1052.8" stroke="#4a4a4a" stroke-width="0.9"/><path d="M1045.1 910.6V929.4M1033.6 922.1H1052.8" stroke="#4a4a4a" stroke-width="0.9"/><path d="M1048.8 910.6V929.4M1033.6 925.8H1052.8" stroke="#4a4a4a" stroke-width="0.9"/><path d="M1052.5 910.6V929.4M1033.6 929.5H1052.8" stroke="#4a4a4a" stroke-width="0.9"/><path d="M1056 917.8H1062.4L1059.2 922.1999999999999Z" fill="#2e2e2e"/><rect x="1072" y="911" width="19" height="18" rx="1.6" fill="#5679ae"/><rect x="1073.8" y="912.8" width="7" height="6.4" fill="#90b0dd" stroke="#7397cc" stroke-width="0.8"/><rect x="1073.8" y="920.8" width="7" height="6.4" fill="#90b0dd" stroke="#7397cc" stroke-width="0.8"/><rect x="1082.2" y="912.8" width="7" height="6.4" fill="#90b0dd" stroke="#7397cc" stroke-width="0.8"/><rect x="1082.2" y="920.8" width="7" height="6.4" fill="#90b0dd" stroke="#7397cc" stroke-width="0.8"/><path d="M1094.8 917.8H1101.2L1098.0 922.1999999999999Z" fill="#2e2e2e"/></svg>
</aside>
<section id="dialogs" role="dialog" aria-label="Parameters">
<div class="b" style="left:407px;top:203px;width:1502px;height:602px;background:#f0f0f0;border:1px solid #8f8f8f;border-right-color:#a4a4a4;border-bottom-color:#bdbdbd;box-shadow:0 2px 7px rgba(0,0,0,0.26);"></div>
<div class="b" style="left:408px;top:204px;width:1500px;height:38.2px;background:#ffffff;"></div>
<span class="t" style="left:417.67px;top:212.60px;font-size:14px;line-height:20px;color:#8c8c8c;transform:scaleX(1.0117);">Parameters</span>
<svg class="b" style="left:1875px;top:212px;" width="24" height="24" viewBox="0 0 24 24"><path d="M6 5.2L18 17.2M18 5.2L6 17.2" stroke="#5a5a5a" stroke-width="1"/></svg>
<div class="b" style="left:422px;top:256px;width:1472px;height:498.6px;background:#ffffff;border:1px solid #888888;"></div>
<div class="b" style="left:448px;top:283px;width:1445px;height:25px;background:#d2d2d2;"></div>
<div class="b" style="left:448px;top:308px;width:1445px;height:25px;background:#b3b3b3;"></div>
<div class="b" style="left:448px;top:358.6px;width:1445px;height:25.2px;background:#d2d2d2;"></div>
<div class="b" style="left:710.0px;top:257px;width:1px;height:26px;background:#e6e6e6;"></div>
<div class="b" style="left:710.0px;top:283px;width:1px;height:25px;background:#c2c2c2;"></div>
<div class="b" style="left:710.0px;top:308px;width:1px;height:25px;background:#a5a5a5;"></div>
<div class="b" style="left:710.0px;top:333px;width:1px;height:25.6px;background:#e3e3e3;"></div>
<div class="b" style="left:710.0px;top:358.6px;width:1px;height:25.2px;background:#c2c2c2;"></div>
<div class="b" style="left:860.0px;top:257px;width:1px;height:26px;background:#e6e6e6;"></div>
<div class="b" style="left:860.0px;top:283px;width:1px;height:25px;background:#c2c2c2;"></div>
<div class="b" style="left:860.0px;top:308px;width:1px;height:25px;background:#a5a5a5;"></div>
<div class="b" style="left:860.0px;top:333px;width:1px;height:25.6px;background:#e3e3e3;"></div>
<div class="b" style="left:860.0px;top:358.6px;width:1px;height:25.2px;background:#c2c2c2;"></div>
<div class="b" style="left:947.8px;top:257px;width:1px;height:26px;background:#e6e6e6;"></div>
<div class="b" style="left:947.8px;top:283px;width:1px;height:25px;background:#c2c2c2;"></div>
<div class="b" style="left:947.8px;top:308px;width:1px;height:25px;background:#a5a5a5;"></div>
<div class="b" style="left:947.8px;top:333px;width:1px;height:25.6px;background:#e3e3e3;"></div>
<div class="b" style="left:947.8px;top:358.6px;width:1px;height:25.2px;background:#c2c2c2;"></div>
<div class="b" style="left:1434.7px;top:257px;width:1px;height:26px;background:#e6e6e6;"></div>
<div class="b" style="left:1434.7px;top:283px;width:1px;height:25px;background:#c2c2c2;"></div>
<div class="b" style="left:1434.7px;top:308px;width:1px;height:25px;background:#a5a5a5;"></div>
<div class="b" style="left:1434.7px;top:333px;width:1px;height:25.6px;background:#e3e3e3;"></div>
<div class="b" style="left:1434.7px;top:358.6px;width:1px;height:25.2px;background:#c2c2c2;"></div>
<div class="b" style="left:1659.8px;top:257px;width:1px;height:26px;background:#e6e6e6;"></div>
<div class="b" style="left:1659.8px;top:283px;width:1px;height:25px;background:#c2c2c2;"></div>
<div class="b" style="left:1659.8px;top:308px;width:1px;height:25px;background:#a5a5a5;"></div>
<div class="b" style="left:1659.8px;top:333px;width:1px;height:25.6px;background:#e3e3e3;"></div>
<div class="b" style="left:1659.8px;top:358.6px;width:1px;height:25.2px;background:#c2c2c2;"></div>
<div class="b" style="left:473.3px;top:333px;width:1px;height:25.6px;background:#dedede;"></div>
<span class="t" style="left:426.51px;top:261.00px;font-size:15px;line-height:20px;color:#111111;font-weight:bold;transform:scaleX(1.0107);">Parameter</span>
<span class="t" style="left:714.04px;top:261.00px;font-size:15px;line-height:20px;color:#111111;font-weight:bold;transform:scaleX(0.9854);">Name</span>
<span class="t" style="left:864.28px;top:261.00px;font-size:15px;line-height:20px;color:#111111;font-weight:bold;transform:scaleX(1.0267);">Unit</span>
<span class="t" style="left:951.24px;top:261.00px;font-size:15px;line-height:20px;color:#111111;font-weight:bold;transform:scaleX(0.9877);">Expression</span>
<span class="t" style="left:1440.23px;top:261.00px;font-size:15px;line-height:20px;color:#111111;font-weight:bold;">Value</span>
<span class="t" style="left:1664.43px;top:261.00px;font-size:15px;line-height:20px;color:#111111;font-weight:bold;transform:scaleX(0.9505);">Comments</span>
<span class="t" style="left:451.94px;top:286.80px;font-size:12px;line-height:20px;color:#1c1c1c;font-weight:bold;transform:scaleX(0.9697);">Favorites</span>
<span class="t" style="left:451.99px;top:311.80px;font-size:12px;line-height:20px;color:#1c1c1c;font-weight:bold;transform:scaleX(0.9798);">User Parameters</span>
<span class="t" style="left:451.91px;top:362.00px;font-size:12px;line-height:20px;color:#1c1c1c;font-weight:bold;transform:scaleX(1.0135);">Model Parameters</span>
<span class="t" style="left:503.93px;top:336.60px;font-size:14px;line-height:20px;color:#151515;transform:scaleX(1.0204);">User Parameter</span>
<span class="t" style="left:714.02px;top:336.60px;font-size:14px;line-height:20px;color:#151515;transform:scaleX(1.1177);">CutIn</span>
<span class="t" style="left:864.56px;top:336.60px;font-size:14px;line-height:20px;color:#151515;transform:scaleX(1.1498);">cm</span>
<span class="t" style="left:951.63px;top:336.60px;font-size:14px;line-height:20px;color:#151515;transform:scaleX(1.0233);">0.3302 cm</span>
<span class="t" style="left:1438.65px;top:336.60px;font-size:14px;line-height:20px;color:#151515;transform:scaleX(0.9881);">0.33</span>
<svg class="b" style="left:425px;top:310px;" width="280" height="50" viewBox="0 0 280 50"><path d="M5.4 7.8L10.2 12.8L15 7.8" fill="none" stroke="#3c3c3c" stroke-width="2"/><path d="M262 9.6H273.8M267.9 3.7V15.5" stroke="#8a8a8a" stroke-width="1.7"/><path d="M61.30 26.50L63.65 32.56L70.14 32.93L65.10 37.04L66.77 43.32L61.30 39.80L55.83 43.32L57.50 37.04L52.46 32.93L58.95 32.56Z" fill="#fff" stroke="#5c5c5c" stroke-width="1.8" stroke-linejoin="round"/></svg>
<div class="b" style="left:1802px;top:764px;width:91px;height:25.4px;background:#e1e1e1;border:1px solid #adadad;"></div>
<span class="t" style="left:1837.92px;top:767.60px;font-size:12px;line-height:20px;color:#111;transform:scaleX(1.0671);">OK</span>
<div class="b" style="left:1000px;top:376px;width:315px;height:258.6px;background:#f0f0f0;border:1px solid #707070;box-shadow:0 5px 14px rgba(0,0,0,0.36);"></div>
<div class="b" style="left:1001px;top:377px;width:313px;height:38.6px;background:#ffffff;"></div>
<span class="t" style="left:1011.60px;top:385.80px;font-size:14.3px;line-height:20px;color:#101010;transform:scaleX(1.0072);">Add User Parameter</span>
<svg class="b" style="left:1280px;top:384px;" width="24" height="24" viewBox="0 0 24 24"><path d="M7 6.2L19 18.2M19 6.2L7 18.2" stroke="#111" stroke-width="1.2"/></svg>
<span class="t" style="left:1014.74px;top:432.20px;font-size:12px;line-height:20px;color:#1a1a1a;">Name</span>
<span class="t" style="left:1014.74px;top:467.30px;font-size:12px;line-height:20px;color:#1a1a1a;transform:scaleX(1.0718);">Unit</span>
<span class="t" style="left:1014.73px;top:502.10px;font-size:12px;line-height:20px;color:#1a1a1a;transform:scaleX(1.0122);">Expression</span>
<span class="t" style="left:1015.64px;top:532.00px;font-size:12px;line-height:20px;color:#1a1a1a;transform:scaleX(1.0048);">Value</span>
<span class="t" style="left:1015.08px;top:562.40px;font-size:12px;line-height:20px;color:#1a1a1a;transform:scaleX(1.0351);">Comment</span>
<div class="b" style="left:1123px;top:430px;width:176px;height:22.6px;background:#fff;border:1px solid #3c8cdc;box-shadow:0 0 0 1px #9cc7f0;"></div>
<div class="b" style="left:1126.2px;top:433px;width:1.2px;height:16.4px;background:#222;"></div>
<span class="t" style="left:1126.42px;top:432.20px;font-size:12px;line-height:20px;color:#9b9b9b;transform:scaleX(1.0173);">Enter Name</span>
<div class="b" style="left:1122px;top:464px;width:178px;height:24.5px;background:#e1e1e1;border:1px solid #adadad;"></div>
<span class="t" style="left:1127.28px;top:466.90px;font-size:12px;line-height:20px;color:#111;transform:scaleX(1.0840);">cm</span>
<svg class="b" style="left:1284px;top:474px;" width="9.4" height="5.2" viewBox="0 0 9.4 5.2"><path d="M0 0H9.4L4.7 5.2Z" fill="#111"/></svg>
<div class="b" style="left:1122px;top:499.2px;width:178px;height:24.2px;background:#fff;border:1px solid #7a7a7a;"></div>
<span class="t" style="left:1125.81px;top:502.10px;font-size:12px;line-height:20px;color:#9b9b9b;transform:scaleX(1.0319);">Enter Expression</span>
<div class="b" style="left:1122px;top:559.4px;width:178px;height:24.2px;background:#fff;border:1px solid #7a7a7a;"></div>
<span class="t" style="left:1125.79px;top:562.40px;font-size:12px;line-height:20px;color:#9b9b9b;transform:scaleX(1.0509);">Enter Comment</span>
<div class="b" style="left:1106px;top:593px;width:91px;height:25.8px;background:#cccccc;border:1px solid #bfbfbf;"></div>
<span class="t" style="left:1142.66px;top:596.60px;font-size:12px;line-height:20px;color:#858585;transform:scaleX(1.0072);">OK</span>
<div class="b" style="left:1207.6px;top:593px;width:91.4px;height:25.8px;background:#e1e1e1;border:1px solid #adadad;"></div>
<span class="t" style="left:1233.78px;top:596.60px;font-size:12px;line-height:20px;color:#111;transform:scaleX(1.0351);">Cancel</span>
</section>
</body></html>
